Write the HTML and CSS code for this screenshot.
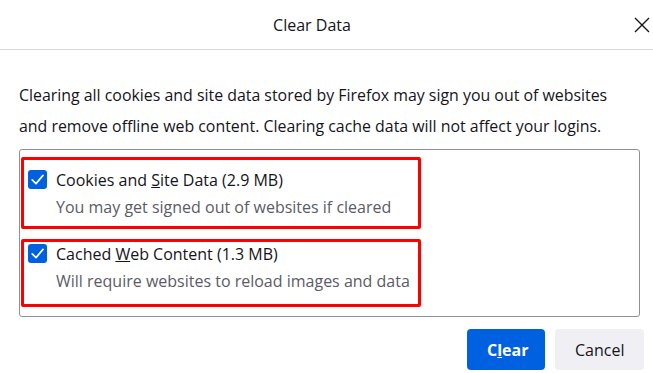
FILE: index.html
```html
<!DOCTYPE html>
<html lang="en">
<head>
<meta charset="utf-8">
<title>Clear Data</title>
<link rel="stylesheet" href="styles.css">
</head>
<body>
<div class="dialog">
  <header class="header">
    <div class="title">Clear Data</div>
    <div class="close" aria-label="Close">
      <svg width="16" height="16" viewBox="0 0 16 16"><path d="M1 1 L15 15 M15 1 L1 15" stroke="#15141a" stroke-width="1.4" fill="none"/></svg>
    </div>
  </header>
  <main class="content">
    <p class="intro">Clearing all cookies and site data stored by Firefox may sign you out of websites and remove offline web content. Clearing cache data will not affect your logins.</p>
    <div class="listbox">
      <div class="item">
        <span class="checkbox"><svg width="19" height="19" viewBox="0 0 19 19"><path d="M4.2 9.8 L8 13.6 L15 5.4" stroke="#fff" stroke-width="1.7" fill="none" stroke-linecap="round" stroke-linejoin="round"/></svg></span>
        <div class="text">
          <div class="label">Cookies and <u>S</u>ite Data (2.9 MB)</div>
          <div class="desc">You may get signed out of websites if cleared</div>
        </div>
      </div>
      <div class="item">
        <span class="checkbox"><svg width="19" height="19" viewBox="0 0 19 19"><path d="M4.2 9.8 L8 13.6 L15 5.4" stroke="#fff" stroke-width="1.7" fill="none" stroke-linecap="round" stroke-linejoin="round"/></svg></span>
        <div class="text">
          <div class="label">Cached <u>W</u>eb Content (1.3 MB)</div>
          <div class="desc">Will require websites to reload images and data</div>
        </div>
      </div>
      <div class="mark mark-1"></div>
      <div class="mark mark-2"></div>
    </div>
  </main>
  <footer class="buttons">
    <button class="btn primary">C<u>l</u>ear</button>
    <button class="btn secondary">Cancel</button>
  </footer>
</div>
</body>
</html>
```
FILE: styles.css
```css
* { box-sizing: border-box; }
html, body { margin: 0; padding: 0; background: #fff; }
body {
  font-family: "Open Sans", "Noto Sans", sans-serif;
  color: #15141a;
  width: 653px;
  height: 373px;
  overflow: hidden;
}
.header {
  height: 50px;
  border-bottom: 1px solid #d8d8dc;
  display: flex;
  align-items: center;
}
.title {
  flex: 1;
  text-align: center;
  font-size: 16px;
  font-weight: 500;
  padding-top: 1px;
}
.close {
  width: 29px;
  display: flex;
  justify-content: flex-end;
  padding-right: 3px;
  padding-top: 1px;
}
.content {
  padding: 0 13px 0 19px;
}
.intro {
  margin: 30px 0 7px 0;
  font-size: 15.9px;
  line-height: 31px;
  width: 616px;
}
.listbox {
  position: relative;
  width: 621px;
  height: 168px;
  border: 1px solid #8f8f9d;
  border-radius: 3px;
  padding: 17px 0 0 8px;
}
.item {
  display: flex;
  align-items: flex-start;
  gap: 9px;
  margin-bottom: 20px;
}
.checkbox {
  width: 19px;
  height: 19px;
  margin-top: 3px;
  background: #0061e0;
  border-radius: 3px;
  display: flex;
}
.label, .desc {
  font-size: 16px;
  line-height: 27px;
}
.desc { color: #5b5b66; }
.mark {
  position: absolute;
  left: 1px;
  width: 400px;
  border: 3px solid #ff0000;
  border-radius: 2px;
}
.mark-1 { top: 7px; height: 72px; }
.mark-2 { top: 89px; height: 68px; }
.buttons {
  display: flex;
  justify-content: flex-end;
  gap: 10px;
  padding: 12px 9px 0 0;
}
.btn {
  height: 41px;
  border: none;
  border-radius: 4px;
  padding: 0 20px;
  font-family: "Open Sans", "Noto Sans", sans-serif;
  font-size: 16px;
}
.primary {
  background: #0061e0;
  color: #fff;
  font-weight: 700;
  width: 78px;
}
.secondary {
  background: #f0f0f4;
  color: #15141a;
  width: 89px;
}
```
